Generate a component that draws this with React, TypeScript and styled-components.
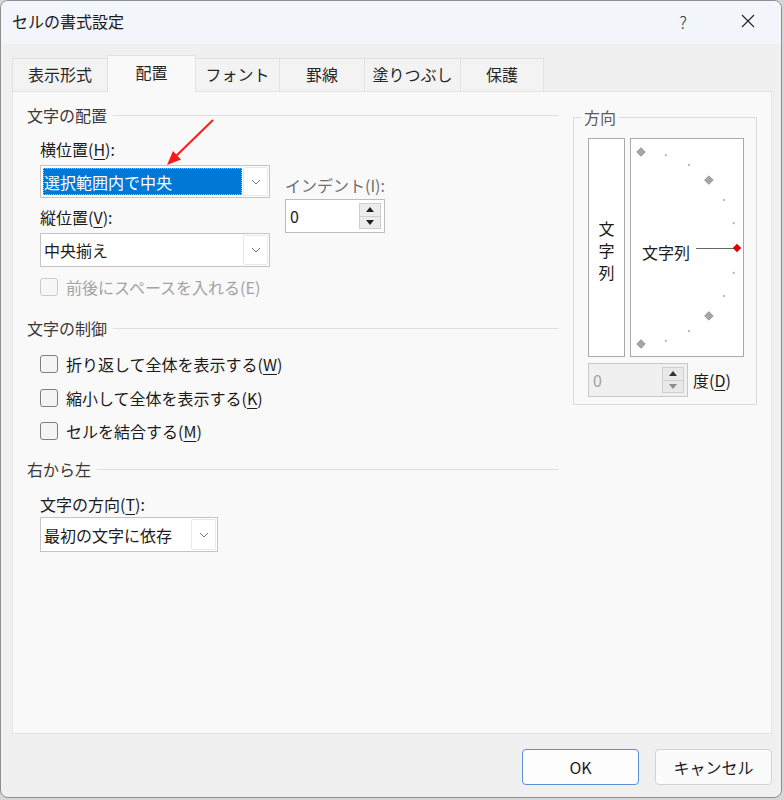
import React from 'react';
import styled, { createGlobalStyle } from 'styled-components';

const GlobalStyle = createGlobalStyle`
  html, body {
    margin: 0;
    padding: 0;
    background: #d6d6d6;
  }
  body {
    font-family: "Noto Sans CJK JP", "Noto Sans", sans-serif;
    color: #1b1b1b;
    font-size: 16px;
  }
`;

const Stage = styled.div`
  position: relative;
  width: 784px;
  height: 800px;
  overflow: hidden;
`;

const Window = styled.div`
  box-sizing: border-box;
  width: 782px;
  height: 798px;
  border: 1px solid #8e8e8e;
  border-radius: 8px;
  background: #f0f0f0;
  display: flex;
  flex-direction: column;
  overflow: hidden;
`;

const TitleBar = styled.div`
  height: 43px;
  flex-shrink: 0;
  display: flex;
  align-items: center;
  padding: 0 13px 3px 11px;
  box-sizing: border-box;
  background: #f2f5f9;
`;

const Title = styled.div`
  flex: 1;
  font-size: 16px;
  line-height: 20px;
  color: #1b1b1b;
`;

const TitleButton = styled.div`
  width: 40px;
  height: 32px;
  display: flex;
  align-items: center;
  justify-content: center;
  font-size: 17px;
  font-weight: 300;
  color: #333;
  & + & {
    margin-left: 25px;
  }
`;

const Body = styled.div`
  flex: 1;
  display: flex;
  flex-direction: column;
  padding: 11px 9px 0 11px;
`;

const TabStrip = styled.div`
  display: flex;
  align-items: flex-start;
  height: 37px;
  margin-bottom: -1px;
  position: relative;
  z-index: 1;
`;

const Tab = styled.div<{ $w: number; $active?: boolean }>`
  box-sizing: border-box;
  width: ${(p) => p.$w}px;
  height: ${(p) => (p.$active ? 37 : 33)}px;
  margin-top: ${(p) => (p.$active ? 0 : 3)}px;
  display: flex;
  align-items: center;
  justify-content: center;
  padding-bottom: ${(p) => (p.$active ? 5 : 3)}px;
  border: 1px solid #e1e1e1;
  border-bottom: none;
  background: ${(p) => (p.$active ? '#f9f9f9' : '#f3f3f3')};
  font-size: 16px;
  line-height: 20px;
  color: #262626;
  & + & {
    margin-left: -1px;
  }
`;

const Panel = styled.div`
  box-sizing: border-box;
  height: 643px;
  display: flex;
  gap: 15px;
  padding: 15px 14px 0 14px;
  border: 1px solid #e3e3e3;
  background: #f9f9f9;
`;

const LeftColumn = styled.div`
  width: 531px;
  display: flex;
  flex-direction: column;
`;

const SectionHeader = styled.div<{ $gap: number }>`
  display: flex;
  align-items: center;
  gap: 6px;
  margin-top: ${(p) => p.$gap}px;
  font-size: 16px;
  line-height: 20px;
  color: #3a3a3a;
  &::after {
    content: '';
    flex: 1;
    height: 1px;
    background: #dfdfdf;
  }
`;

const FieldArea = styled.div`
  display: grid;
  grid-template-columns: 230px 100px;
  column-gap: 15px;
  margin: 14px 0 0 13px;
`;

const FieldStack = styled.div<{ $indent?: number }>`
  display: flex;
  flex-direction: column;
  margin-left: ${(p) => p.$indent ?? 0}px;
`;

const Label = styled.div<{ $gap?: number; $muted?: boolean }>`
  margin-top: ${(p) => p.$gap ?? 0}px;
  font-size: 16px;
  line-height: 20px;
  color: ${(p) => (p.$muted ? '#6f6f6f' : '#1b1b1b')};
  white-space: nowrap;
`;

const U = styled.span`
  text-decoration: underline;
  text-underline-offset: 3px;
  text-decoration-thickness: 1px;
`;

const SelectBox = styled.div<{ $w: number; $h: number; $gap: number }>`
  box-sizing: border-box;
  width: ${(p) => p.$w}px;
  height: ${(p) => p.$h}px;
  margin-top: ${(p) => p.$gap}px;
  display: flex;
  border: 1px solid #c4c4c4;
  background: #fff;
`;

const SelectValue = styled.div<{ $selected?: boolean }>`
  flex: 1;
  display: flex;
  align-items: center;
  margin: 2px 1px 2px 2px;
  padding-left: 1px;
  font-size: 16px;
  color: ${(p) => (p.$selected ? '#fff' : '#1b1b1b')};
  background: ${(p) => (p.$selected ? '#0078d7' : 'transparent')};
  outline: ${(p) => (p.$selected ? '1px dotted #f0a0a0' : 'none')};
  outline-offset: -1px;
  white-space: nowrap;
`;

const ChevronBox = styled.div`
  box-sizing: border-box;
  width: 25px;
  margin: 1px 1px 1px 0;
  display: flex;
  align-items: center;
  justify-content: center;
  border: 1px solid #e8e8e8;
  border-radius: 2px;
  background: #fff;
`;

const SpinBox = styled.div<{ $disabled?: boolean; $gap?: number }>`
  box-sizing: border-box;
  width: 100px;
  height: 34px;
  margin-top: ${(p) => p.$gap ?? 0}px;
  display: flex;
  align-items: stretch;
  border: 1px solid ${(p) => (p.$disabled ? '#c8c8c8' : '#bdbdbd')};
  background: ${(p) => (p.$disabled ? '#f0f0f0' : '#fff')};
  padding: 3px 3px 3px 0;
`;

const SpinValue = styled.div<{ $disabled?: boolean }>`
  flex: 1;
  display: flex;
  align-items: center;
  padding-left: 4px;
  font-size: 16px;
  color: ${(p) => (p.$disabled ? '#a3a3a3' : '#1b1b1b')};
`;

const SpinButtons = styled.div`
  width: 22px;
  display: flex;
  flex-direction: column;
`;

const SpinButton = styled.div<{ $disabled?: boolean }>`
  flex: 1;
  display: flex;
  align-items: center;
  justify-content: center;
  border: 1px solid #cfcfcf;
  background: ${(p) => (p.$disabled ? '#e9e9e9' : '#ececec')};
  & + & {
    border-top: none;
  }
`;

const CheckRow = styled.div<{ $gap: number; $disabled?: boolean }>`
  display: flex;
  align-items: center;
  gap: 8px;
  margin: ${(p) => p.$gap}px 0 0 13px;
  font-size: 16px;
  line-height: 20px;
  color: ${(p) => (p.$disabled ? '#a3a3a3' : '#1b1b1b')};
`;

const CheckBox = styled.span<{ $disabled?: boolean }>`
  box-sizing: border-box;
  width: 18px;
  height: 18px;
  border: 1px solid ${(p) => (p.$disabled ? '#cbcbcb' : '#7f7f7f')};
  border-radius: 3px;
  background: ${(p) => (p.$disabled ? '#f7f7f7' : '#f4f4f4')};
`;

const Fieldset = styled.fieldset`
  box-sizing: border-box;
  width: 184px;
  min-width: 0;
  height: 298px;
  margin: 0;
  padding: 11px 12px 7px 14px;
  border: 1px solid #dcdcdc;
  align-self: flex-start;
`;

const Legend = styled.legend`
  padding: 0 3px;
  margin-left: -7px;
  font-size: 16px;
  line-height: 20px;
  color: #5a5a5a;
`;

const OrientRow = styled.div`
  display: flex;
  gap: 5px;
  height: 219px;
`;

const VerticalTextBox = styled.div`
  box-sizing: border-box;
  width: 37px;
  display: flex;
  flex-direction: column;
  align-items: center;
  justify-content: center;
  padding-top: 5px;
  border: 1px solid #a9a9a9;
  background: #fff;
  font-size: 16px;
  line-height: 22px;
`;

const DialBox = styled.div`
  box-sizing: border-box;
  width: 114px;
  border: 1px solid #a9a9a9;
  background: #fff;
  display: flex;
`;

const DegreeRow = styled.div`
  display: flex;
  align-items: center;
  gap: 5px;
  margin-top: 6px;
`;

const Footer = styled.div`
  display: flex;
  justify-content: flex-end;
  gap: 16px;
  margin-top: 15px;
`;

const Button = styled.button<{ $primary?: boolean }>`
  box-sizing: border-box;
  width: 117px;
  height: 36px;
  border: 1px solid ${(p) => (p.$primary ? '#5a8fd8' : '#d3d3d3')};
  border-radius: 4px;
  background: ${(p) => (p.$primary ? '#fdfdfd' : '#fbfbfb')};
  font-family: inherit;
  font-size: 16px;
  color: #1b1b1b;
  padding: 0;
`;

const Annotation = styled.svg`
  position: absolute;
  left: 160px;
  top: 112px;
  pointer-events: none;
`;

function Chevron() {
  return (
    <svg width="10" height="6" viewBox="0 0 10 6">
      <path d="M1 1 L5 5 L9 1" fill="none" stroke="#777" strokeWidth="1" />
    </svg>
  );
}

function Arrow({ up, color }: { up?: boolean; color: string }) {
  return (
    <svg width="8" height="5" viewBox="0 0 8 5">
      <path d={up ? 'M0 5 L4 0 L8 5 Z' : 'M0 0 L8 0 L4 5 Z'} fill={color} />
    </svg>
  );
}

function Select({ value, w, h, gap, selected }: { value: string; w: number; h: number; gap: number; selected?: boolean }) {
  return (
    <SelectBox $w={w} $h={h} $gap={gap}>
      <SelectValue $selected={selected}>{value}</SelectValue>
      <ChevronBox>
        <Chevron />
      </ChevronBox>
    </SelectBox>
  );
}

function Spinner({ disabled, gap }: { disabled?: boolean; gap?: number }) {
  const c = disabled ? '#8c8c8c' : '#222';
  return (
    <SpinBox $disabled={disabled} $gap={gap}>
      <SpinValue $disabled={disabled}>0</SpinValue>
      <SpinButtons>
        <SpinButton $disabled={disabled}>
          <Arrow up color={disabled ? '#333' : c} />
        </SpinButton>
        <SpinButton $disabled={disabled}>
          <Arrow color={c} />
        </SpinButton>
      </SpinButtons>
    </SpinBox>
  );
}

function Dial() {
  const cx = 10;
  const cy = 109;
  const r = 96;
  const marks = [] as React.ReactNode[];
  for (let a = -90; a <= 90; a += 15) {
    const rad = (a * Math.PI) / 180;
    const x = cx + r * Math.cos(rad);
    const y = cy - r * Math.sin(rad);
    if (a === 0) continue;
    if (a % 45 === 0) {
      marks.push(
        <rect key={a} x={x - 3} y={y - 3} width="6" height="6" fill="#a6a6a6" stroke="#8a8a8a" strokeWidth="0.8" transform={`rotate(45 ${x} ${y})`} />
      );
    } else {
      marks.push(<rect key={a} x={x - 1} y={y - 1} width="2" height="2" fill="#b8b8b8" />);
    }
  }
  return (
    <svg width="112" height="217" viewBox="0 0 112 217">
      {marks}
      <line x1="65" y1={cy + 0.5} x2="104" y2={cy + 0.5} stroke="#666" strokeWidth="1" />
      <rect x="103" y={cy - 3} width="6" height="6" fill="#e00000" transform={`rotate(45 106 ${cy})`} />
      <text x="11" y="120" fontSize="16" fill="#1b1b1b" fontFamily='"Noto Sans CJK JP", sans-serif'>
        文字列
      </text>
    </svg>
  );
}

const tabs = [
  { label: '表示形式', w: 96 },
  { label: '配置', w: 89, active: true },
  { label: 'フォント', w: 85 },
  { label: '罫線', w: 86 },
  { label: '塗りつぶし', w: 97 },
  { label: '保護', w: 84 },
];

export default function App() {
  return (
    <Stage>
      <GlobalStyle />
      <Window>
        <TitleBar>
          <Title>セルの書式設定</Title>
          <TitleButton>?</TitleButton>
          <TitleButton>
            <svg width="14" height="14" viewBox="0 0 14 14">
              <path d="M1 1 L13 13 M13 1 L1 13" stroke="#222" strokeWidth="1.1" />
            </svg>
          </TitleButton>
        </TitleBar>
        <Body>
          <TabStrip>
            {tabs.map((t) => (
              <Tab key={t.label} $w={t.w} $active={t.active}>
                {t.label}
              </Tab>
            ))}
          </TabStrip>
          <Panel>
            <LeftColumn>
              <SectionHeader $gap={-2}>文字の配置</SectionHeader>
              <FieldArea>
                <FieldStack>
                  <Label>
                    横位置(<U>H</U>):
                  </Label>
                  <Select value="選択範囲内で中央" w={230} h={33} gap={6} selected />
                  <Label $gap={9}>
                    縦位置(<U>V</U>):
                  </Label>
                  <Select value="中央揃え" w={230} h={34} gap={6} />
                </FieldStack>
                <FieldStack>
                  <Label $gap={36} $muted>
                    インデント(I):
                  </Label>
                  <Spinner gap={4} />
                </FieldStack>
              </FieldArea>
              <CheckRow $gap={10} $disabled>
                <CheckBox $disabled />
                前後にスペースを入れる(E)
              </CheckRow>

              <SectionHeader $gap={21}>文字の制御</SectionHeader>
              <CheckRow $gap={16}>
                <CheckBox />
                <span>
                  折り返して全体を表示する(<U>W</U>)
                </span>
              </CheckRow>
              <CheckRow $gap={14}>
                <CheckBox />
                <span>
                  縮小して全体を表示する(<U>K</U>)
                </span>
              </CheckRow>
              <CheckRow $gap={13}>
                <CheckBox />
                <span>
                  セルを結合する(<U>M</U>)
                </span>
              </CheckRow>

              <SectionHeader $gap={18}>右から左</SectionHeader>
              <FieldStack $indent={13}>
                <Label $gap={15}>
                  文字の方向(<U>T</U>):
                </Label>
                <Select value="最初の文字に依存" w={178} h={35} gap={3} />
              </FieldStack>
            </LeftColumn>

            <Fieldset>
              <Legend>方向</Legend>
              <OrientRow>
                <VerticalTextBox>
                  <span>文</span>
                  <span>字</span>
                  <span>列</span>
                </VerticalTextBox>
                <DialBox>
                  <Dial />
                </DialBox>
              </OrientRow>
              <DegreeRow>
                <Spinner disabled />
                <Label>
                  度(<U>D</U>)
                </Label>
              </DegreeRow>
            </Fieldset>
          </Panel>
          <Footer>
            <Button $primary>OK</Button>
            <Button>キャンセル</Button>
          </Footer>
        </Body>
      </Window>
      <Annotation width="60" height="60" viewBox="0 0 60 60">
        <line x1="53" y1="8" x2="14" y2="46" stroke="#ff1a1a" strokeWidth="2" />
        <path d="M7 53 L21 47.5 L13 39 Z" fill="#ff1a1a" />
      </Annotation>
    </Stage>
  );
}
